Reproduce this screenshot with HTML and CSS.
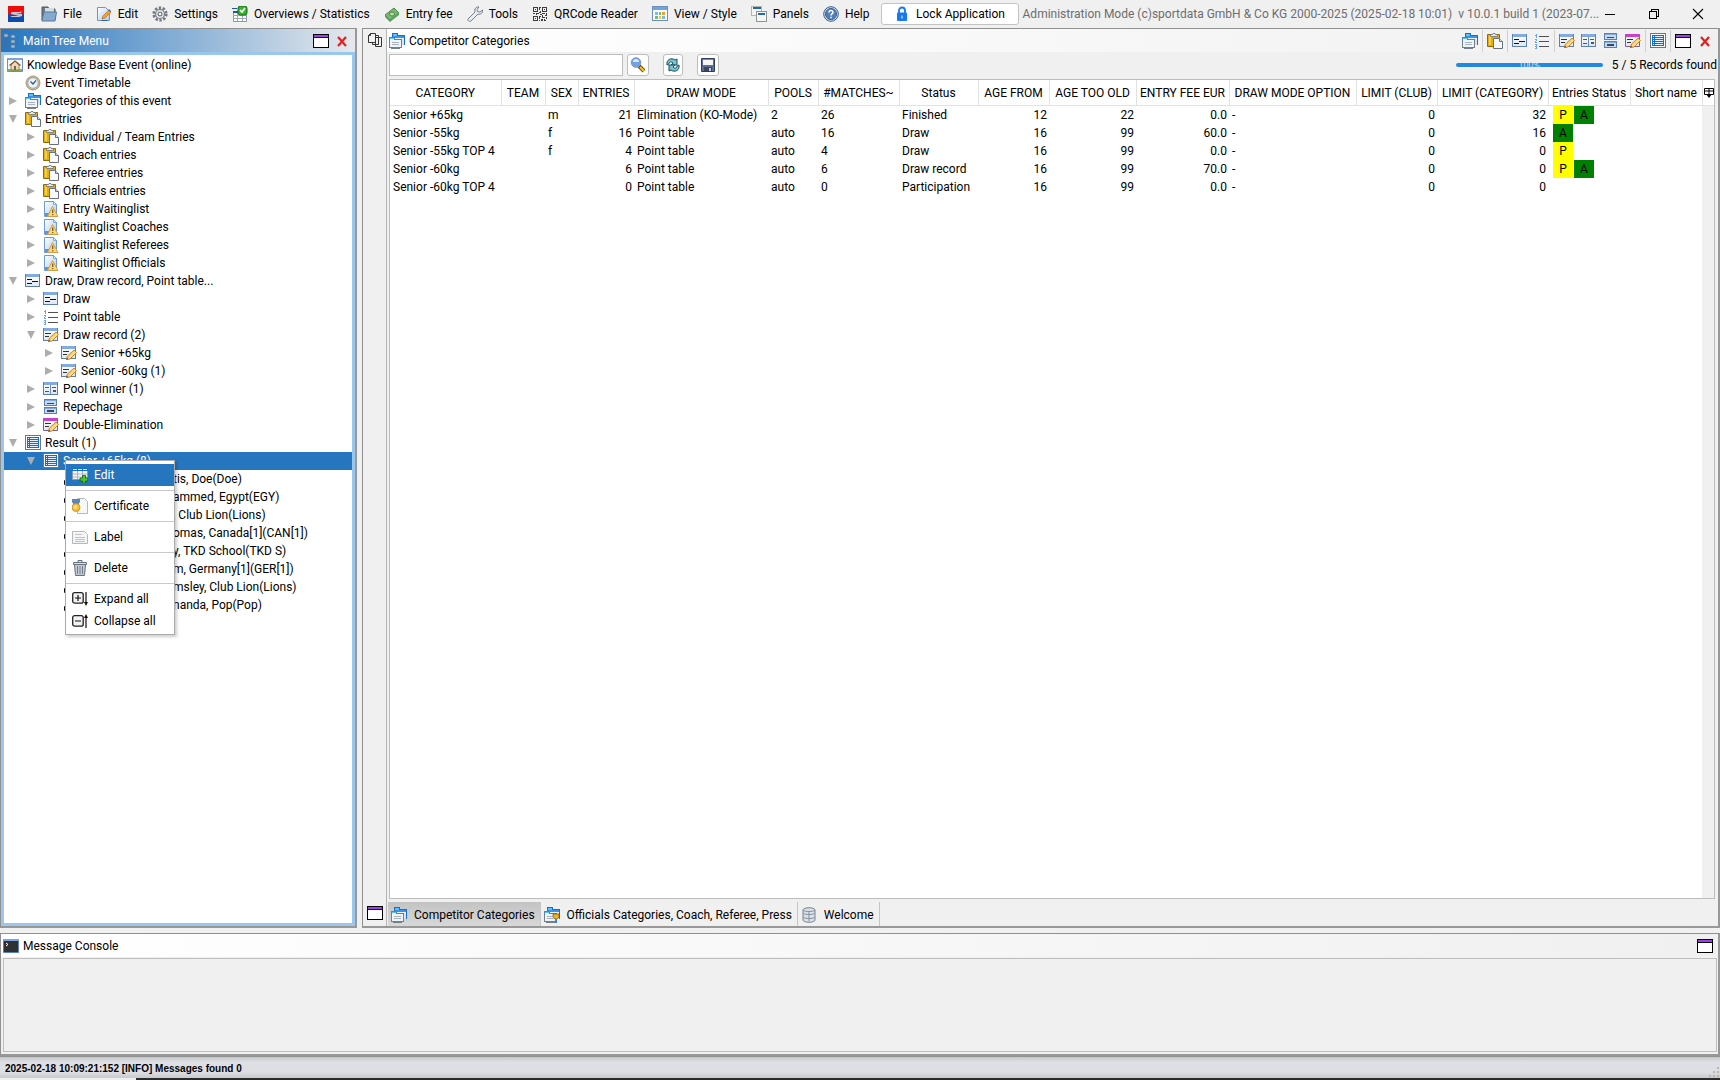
FILE: index.html
```html
<!DOCTYPE html>
<html lang="en">
<head>
  <meta charset="UTF-8">
  <meta name="viewport" content="width=device-width, initial-scale=1.0">
  <title>Administration Mode</title>
  <link rel="stylesheet" href="styles.css">
</head>
<body>

  <!-- icon sprite -->
  <svg class="sprite" aria-hidden="true">
    <defs>
      <linearGradient id="gWin" x1="0" y1="0" x2="0" y2="1"><stop offset="0" stop-color="#fff"/><stop offset="1" stop-color="#dfe6f0"/></linearGradient>
      <linearGradient id="gDoc" x1="0" y1="0" x2="1" y2="1"><stop offset="0" stop-color="#fff"/><stop offset="1" stop-color="#a9cbf2"/></linearGradient>
      <linearGradient id="gLogo" x1="0" y1="0" x2="0" y2="1"><stop offset="0" stop-color="#f00a0a"/><stop offset=".48" stop-color="#f00a0a"/><stop offset=".56" stop-color="#0a4bb4"/><stop offset="1" stop-color="#0a4bb4"/></linearGradient>
    </defs>
    <symbol id="logo" viewBox="0 0 16 16"><path fill="url(#gLogo)" d="M0 0h16v16H0z"/><path d="M3 6h9l2-1-1 2H7l7 1v2l-3 1H2l2-1h7L3 8z" fill="#c9c4cf"/></symbol>
    <symbol id="folder" viewBox="0 0 16 16"><path d="M1 1h6l1 2h6v11H1z" fill="#6b7885" stroke="#4c5864"/><path d="M4 2h9v6H4z" fill="#d5dde4"/><path d="M1 14l2-8h12.500L14 15H1z" fill="#87a9cd" stroke="#52779f"/></symbol>
    <symbol id="edit" viewBox="0 0 16 16"><path d="M1.500 1.500h8l4 4v9h-12z" fill="url(#gDoc)" stroke="#7c93b0"/><path d="M6 13l1-3 6-6 2 2-6 6z" fill="#f5a32a" stroke="#c0651a" stroke-width=".7"/><path d="M12 4l1-1 2 2-1 1z" fill="#2d6fd0"/><path d="M5 15h6v-1H6z" fill="#1e63c4"/></symbol>
    <symbol id="gear" viewBox="0 0 16 16"><circle cx="8" cy="8" r="6.300" fill="none" stroke="#737980" stroke-width="2.600" stroke-dasharray="2.400 1.550"/><circle cx="8" cy="8" r="4.500" fill="#e8ebee" stroke="#737980" stroke-width="1.200"/><circle cx="8" cy="8" r="1.900" fill="#fff" stroke="#737980" stroke-width="1.200"/></symbol>
    <symbol id="stats" viewBox="0 0 16 16"><path d="M1.500 6.500h13v9h-13z" fill="#fff" stroke="#8b97a5"/><path d="M1 9.500h14M1 12.500h14M5.500 6v9M10.500 6v9" stroke="#9aa8b6" fill="none"/><path d="M0 2h5v1H0zM1 5h14v2H1z" fill="#2057ae"/><rect x="6" y="0" width="9" height="9" rx="2.500" fill="#39b52c" stroke="#16651a"/><path d="M8 4l2 2 3-4" stroke="#fff" stroke-width="1.500" fill="none"/></symbol>
    <symbol id="money" viewBox="0 0 16 16"><path d="M1 9l9-7 5 5-9 7z" fill="#79b873" stroke="#478a49"/><path d="M1 11l5 5 9-7v-2l-9 7-5-5z" fill="#5da062"/><ellipse cx="8" cy="8" rx="2.500" ry="2" fill="#c1e0ae" stroke="#478a49"/></symbol>
    <symbol id="wrench" viewBox="0 0 16 16"><path d="M1 13l7-7c-1-3 1-5.500 4-5l-2 2.500.5 2L13 6l2.500-2c.5 3-2 5-4.500 4l-7 7c-1.500 1-4-.5-3-2z" fill="#e9edf1" stroke="#74808c"/></symbol>
    <symbol id="qr" viewBox="0 0 16 16" shape-rendering="crispEdges"><path d="M1.500 1.500h4v4h-4zM10.500 1.500h4v4h-4zM1.500 10.500h4v4h-4z" fill="none" stroke="#3d3d3d"/><path d="M3 3h1v1H3zM12 3h1v1h-1zM3 12h1v1H3zM7 1h2v1H8v2H7zM8 5h1v2H7V6h1zM1 7h2v1H1zM4 7h3v1H5v1H4zM8 8h2v1H8zM10 7h3v1h-3zM14 7h1v2h-1zM7 10h2v1H8v2H7zM10 9h1v2h2v1h-3zM13 9h2v1h-2zM14 11h1v2h-1zM9 13h2v2H9zM12 13h1v1h1v1h-2zM7 14h1v1H7z" fill="#3d3d3d"/></symbol>
    <symbol id="view" viewBox="0 0 16 16" shape-rendering="crispEdges"><path d="M.5.500h15v14H.5z" fill="#fff" stroke="#6a8fc0"/><path d="M1 1h14v3H1z" fill="#72a1dd"/><path d="M3 6h3v3H3zM10 10h3v3h-3z" fill="#82b7ee"/><path d="M7 6h2v3H7zM3 10h3v3H3z" fill="#6fc26a"/><path d="M10 6h3v3h-3z" fill="#f19b41"/><path d="M7 10h2v3H7z" fill="#edc63e"/></symbol>
    <symbol id="panels" viewBox="0 0 16 16" shape-rendering="crispEdges"><path d="M.5.500h10v9H.5z" fill="#f6f7f4" stroke="#b3b6ae"/><path d="M2 1h8v2H2z" fill="#2765b3"/><path d="M5.500 5.500h10v10h-10z" fill="#f6f7f4" stroke="#8f938b"/><path d="M7 7h7v2H7z" fill="#2765b3"/></symbol>
    <symbol id="help" viewBox="0 0 16 16"><circle cx="8" cy="8" r="7.300" fill="#d7e1ee" stroke="#385b8c"/><circle cx="8" cy="8" r="5.500" fill="#5580b6" stroke="#345e97"/><path d="M6 6.500C6 4 10 4 10 6.300 10 8 8 7.800 8 9.500M8 10.800v1.400" fill="none" stroke="#fff" stroke-width="1.500"/></symbol>
    <symbol id="lock" viewBox="0 0 16 16"><path d="M5 7V4.500a3 3 0 0 1 6 0V7" fill="none" stroke="#1479f2" stroke-width="1.800"/><rect x="3" y="6.500" width="10" height="8.500" rx="1" fill="#1479f2"/><path d="M7.500 9.500h1v3h-1z" fill="#fff"/></symbol>
    <symbol id="treeico" viewBox="0 0 16 16"><path d="M3.500 2v12M3 4.500h4M3 8.500h4M3 13h4" stroke="#426d9a" fill="none"/><path d="M1 1h4v3H1zM8 2h4v3H8zM8 7h4v3H8zM8 12h4v3H8z" fill="#a5bed6" stroke="#55789b" stroke-width=".8"/></symbol>
    <symbol id="window" viewBox="0 0 16 16" shape-rendering="crispEdges"><path d="M.5 1.500h15v13H.5z" fill="#fff" stroke="#000"/><path d="M1 2h14v2H1z" fill="#a43cf0"/><path d="M1 4h14v1H1z" fill="#000"/></symbol>
    <symbol id="cross" viewBox="0 0 16 16"><path d="M4 4l8 9M12 4l-8 9" stroke="#e0201f" stroke-width="2.200"/></symbol>
    <symbol id="home" viewBox="0 0 16 16"><path d="M.5 1.500h15v13H.5z" fill="#f5f8fb" stroke="#6f8fb8"/><path d="M1 1h14v2H1z" fill="#7ba5da"/><path d="M1 12h14v2H1z" fill="#7cb65b"/><path d="M4 8l4-4 4 4v5H4z" fill="#ead9b6" stroke="#8a6a45" stroke-width=".8"/><path d="M2.500 8.500L8 4l5.500 4.500" fill="none" stroke="#7d5134" stroke-width="1.200"/><path d="M7 9h2v4H7z" fill="#885f3c"/></symbol>
    <symbol id="clock" viewBox="0 0 16 16"><circle cx="8" cy="8" r="7" fill="#d2b98b" stroke="#9a8564" stroke-width=".8"/><circle cx="8" cy="8" r="5.200" fill="#eaf3fc" stroke="#8ea1b6" stroke-width=".8"/><path d="M5.500 6.500L8 9l3-3.500" fill="none" stroke="#3d5472" stroke-width="1.200"/></symbol>
    <symbol id="cats" viewBox="0 0 16 16" shape-rendering="crispEdges"><path d="M3.500 3.500V.5h5v2h7v9h-12z" fill="#eaf4ff" stroke="#176fcb"/><path d="M4 3h11v2H4z" fill="#3993e6"/><path d="M4 1h4v2H4z" fill="#58c4ff"/><path d="M13 6h2v6h-2z" fill="#dfe3e8"/><path d="M.5 7.500v-3h5v2h7v8H.5z" fill="#f1f4f7" stroke="#4886c7"/><path d="M0 8h1v7H0zM12 8h1v7h-1zM2 15h3v-1h3v1h3v1H2z" fill="#75808b"/><path d="M1 5h4v1H1z" fill="#58c4ff"/><path d="M3 9h7v1H3zM3 11h7v1H3z" fill="#aab4be"/></symbol>
    <symbol id="offcats" viewBox="0 0 16 16"><use href="#cats"/><path d="M9 7h6v3l-2 2h-2L9 10z" fill="#eeb51d" stroke="#65480a" stroke-width=".6"/><path d="M11 12h2v4h-2z" fill="#2785e3"/></symbol>
    <symbol id="paste" viewBox="0 0 16 16"><path d="M.5 1.500h12v12H.5z" fill="#e4ac13" stroke="#956a05"/><path d="M2 3h2v9H2z" fill="#f7cf45"/><path d="M3.500 3.500v-2h2l.5-1h2l.5 1h2v2z" fill="#e5e9ee" stroke="#68717c" stroke-width=".8"/><path d="M6.500 5.500h6l3 3v7h-9z" fill="#f9fafc" stroke="#68717c"/><path d="M12.500 5.500v3h3" fill="#dce2ea" stroke="#68717c"/></symbol>
    <symbol id="wait" viewBox="0 0 16 16"><path d="M1.500.5h9l3 3v12h-12z" fill="url(#gDoc)" stroke="#6e9bd0"/><path d="M10.500.5v3h3z" fill="#fff" stroke="#6e9bd0" stroke-width=".8"/><path d="M2 12h5v3H2z" fill="#5f95d8"/><path d="M9.500 5.500L15 15.500H4.500z" fill="#fbd674" stroke="#cf9a3f" stroke-width=".9"/><path d="M9.700 8.500v3.500M9.700 13v1.200" stroke="#79521c" stroke-width="1.200"/></symbol>
    <symbol id="frame" viewBox="0 0 16 16" shape-rendering="crispEdges"><path d="M.5 1.500h14v12H.5z" fill="url(#gWin)" stroke="#5d80b4"/><path d="M1 1h13v3H1z" fill="#84abe0"/></symbol>
    <symbol id="draw" viewBox="0 0 16 16" shape-rendering="crispEdges"><use href="#frame"/><path d="M2 6h5v1H2zM2 10h5v1H2zM7 8h6v1H7z" fill="#111"/></symbol>
    <symbol id="points" viewBox="0 0 16 16" shape-rendering="crispEdges"><path d="M5 3h10v1H5zM5 8h10v1H5zM5 13h10v1H5z" fill="#4e5257"/><path d="M2 1h1v4H2zM1 2h1v1H1zM1 6h2v1H1zM2 7h1v1H2zM1 8h1v1H1zM1 9h2v1H1zM1 11h2v1H1zM2 12h1v1H2zM1 13h2v1H1zM2 14h1v1H2zM1 15h2v1H1z" fill="#70a5e5"/></symbol>
    <symbol id="pencil" viewBox="0 0 16 16"><path d="M5.500 14.500l1-3.500L13 5l2.500 2.500-6.500 6.500z" fill="#fbcf6b" stroke="#be7f29" stroke-width=".9"/><path d="M7 14l7-6.500" stroke="#fff0bd" stroke-width=".8"/><path d="M5 15l.7-2.500L8 14z" fill="#a25a24"/></symbol>
    <symbol id="record" viewBox="0 0 16 16"><use href="#frame"/><path d="M2 6h6v1H2zM2 9h4v1H2z" fill="#333"/><use href="#pencil"/></symbol>
    <symbol id="pool" viewBox="0 0 16 16" shape-rendering="crispEdges"><use href="#frame"/><path d="M7 4h1v9H7z" fill="#6c8fc3"/><path d="M2 6h4v1H2zM2 10h4v1H2zM9 6h4v1H9zM10 9h3v2h-3z" fill="#555"/></symbol>
    <symbol id="repechage" viewBox="0 0 16 16" shape-rendering="crispEdges"><path d="M1.500.5h12v6h-12zM1.500 8.500h12v6h-12z" fill="#c4d9f4" stroke="#5d80b4"/><path d="M4 4h7v1H4zM4 11h7v2H4z" fill="#3f464e"/><path d="M2 1h11v1H2zM2 9h11v1H2z" fill="#84abe0"/></symbol>
    <symbol id="double" viewBox="0 0 16 16"><path d="M.5 1.500h14v12H.5z" fill="url(#gWin)" stroke="#7d5c9a"/><path d="M0 1h15v3H0z" fill="#cc3fcc"/><path d="M2 6h6v1H2zM2 9h4v1H2z" fill="#333"/><use href="#pencil"/></symbol>
    <symbol id="result" viewBox="0 0 16 16" shape-rendering="crispEdges"><path d="M.5.500h15v14H.5z" fill="#fff" stroke="#6c7680"/><path d="M2 2h12v11H2z" fill="#1070d2"/><path d="M5 3h8v1H5zM5 5h8v1H5zM5 7h8v1H5zM5 9h8v1H5zM5 11h8v1H5zM3 3h1v1H3zM3 5h1v1H3zM3 7h1v1H3zM3 9h1v1H3zM3 11h1v1H3z" fill="#e4f1ff"/></symbol>
    <symbol id="person" viewBox="0 0 16 16"><path d="M3 1h9v5H3z" fill="#b27b25"/><path d="M4.500 8.500h9v6h-9l-2-1v-4z" fill="#fff" stroke="#111"/></symbol>
    <symbol id="tableadd" viewBox="0 0 16 16"><path d="M.5 1.500h15v11H.5z" fill="#f4f7fa" stroke="#8e9aa6"/><path d="M0 1h16v3H0z" fill="#1470d0"/><path d="M1 2h4v1H1zM6 2h4v1H6zM11 2h4v1h-4z" fill="#d5ecff"/><path d="M1 7h14M1 10h14M5.500 4v8M10.500 4v8" stroke="#aab3bd"/><path d="M10.500 8.500h3v2.500h2.500v3h-2.500V16h-3v-2H8v-3h2.500z" fill="#48c72e" stroke="#155c12" stroke-width=".8"/></symbol>
    <symbol id="cert" viewBox="0 0 16 16"><path d="M5.500.5h7l3 3v12h-10z" fill="#f7f8f9" stroke="#b4b9be"/><path d="M0 1h8v3L6 7H2L0 4z" fill="#5b85b8"/><circle cx="4" cy="9.500" r="4" fill="#f6bd36" stroke="#c98a1c" stroke-width=".8"/><circle cx="3.500" cy="9" r="1.800" fill="#ffe08a"/></symbol>
    <symbol id="label" viewBox="0 0 16 16"><path d="M.5 2.500h12l3 3v9H.5z" fill="#f4f5f6" stroke="#b4b9be"/><path d="M3 5.500h7M3 8.500h10M3 10.500h10M3 12.500h10" stroke="#c0c5ca"/></symbol>
    <symbol id="trash" viewBox="0 0 16 16"><path d="M2.500 4.500h11l-1 11h-9z" fill="#c3ccd6" stroke="#66717d"/><path d="M1.500 2.500h13v2h-13zM6 2V.5h4V2" fill="#dde3e9" stroke="#66717d"/><path d="M5.500 6v8M8 6v8M10.500 6v8" stroke="#737f8c"/></symbol>
    <symbol id="expand" viewBox="0 0 16 16"><rect x=".7" y="1.700" width="10.500" height="10.500" rx="2" fill="#f2f2f2" stroke="#222" stroke-width="1.300"/><path d="M3 7h6M6 4v6M14 1v12" stroke="#111" stroke-width="1.200"/><path d="M12 11h4l-2 4z" fill="#111"/></symbol>
    <symbol id="collapse" viewBox="0 0 16 16"><rect x=".7" y="2.700" width="10.500" height="10.500" rx="2" fill="#f2f2f2" stroke="#222" stroke-width="1.300"/><path d="M3 8h6M14 3v12" stroke="#111" stroke-width="1.200"/><path d="M12 5h4l-2-4z" fill="#111"/></symbol>
    <symbol id="copies" viewBox="0 0 16 16"><path d="M8.500 5.500h6v9h-6zM5.500 3.500h6v9h-6z" fill="#f1f1f1" stroke="#333"/><path d="M3.500 1.500h5v9h-7v-7z" fill="#f1f1f1" stroke="#333"/><path d="M3.500 1.500v2h-2" fill="none" stroke="#333"/></symbol>
    <symbol id="search" viewBox="0 0 16 16"><path d="M9 9l5 5" stroke="#7d4c12" stroke-width="4"/><path d="M10 10l4 4" stroke="#f3c12d" stroke-width="2.200"/><circle cx="6" cy="5.500" r="4.800" fill="#6fa3e8" stroke="#8797ae"/><path d="M3 5a3 3 0 0 1 6 0z" fill="#d6e8fd"/></symbol>
    <symbol id="refresh" viewBox="0 0 16 16"><path d="M2 8c-1-5 4-8 8-5l2-1v6H6l2-2c-2-2-4-1-4 1z" fill="#7cc3cd" stroke="#154f60"/><path d="M14 8c1 5-4 8-8 5l-2 1V8h6l-2 2c2 2 4 1 4-1z" fill="#7cc3cd" stroke="#154f60"/></symbol>
    <symbol id="save" viewBox="0 0 16 16"><path d="M1.500 1.500h13v13h-13z" fill="#5b6e95" stroke="#323f5c"/><path d="M3 2h10v6H3z" fill="#f7f4f2"/><path d="M3 2h10v1H3z" fill="#e6604d"/><path d="M4 10h8v4H4z" fill="#3a465c"/><path d="M9 11h2v3H9z" fill="#c5ced9"/></symbol>
    <symbol id="db" viewBox="0 0 16 16"><path d="M2 3c0-3 12-3 12 0v10c0 3-12 3-12 0z" fill="#dce1e7" stroke="#74818e"/><path d="M2 6c1 2 11 2 12 0M2 10c1 2 11 2 12 0M2 3c1 2 11 2 12 0M8 5v9" fill="none" stroke="#8592a0"/></symbol>
    <symbol id="console" viewBox="0 0 16 16"><path d="M.5 1.500h15v13H.5z" fill="#2e3033" stroke="#5880b8"/><path d="M0 1h16v2H0z" fill="#7aa6dd"/><path d="M3 5l2 1.500L3 8" stroke="#fff" fill="none"/></symbol>
    <symbol id="colctl" viewBox="0 0 12 14"><path d="M1.500 2.500h9v6h-9zM1 5h10M6 2v6" fill="none" stroke="#000"/><path d="M3 8h6l-3 4z" fill="#000"/></symbol>
    <symbol id="min" viewBox="0 0 12 12" shape-rendering="crispEdges"><path d="M1 6h10v1H1z"/></symbol>
    <symbol id="restore" viewBox="0 0 12 12" shape-rendering="crispEdges"><path d="M1.500 3.500h7v7h-7zM3.500 3V1.500h7v7H9" fill="none" stroke="#000"/></symbol>
    <symbol id="close" viewBox="0 0 12 12"><path d="M1 1l10 10M11 1L1 11" stroke="#000" stroke-width="1.100"/></symbol>
    <symbol id="grip" viewBox="0 0 12 12" shape-rendering="crispEdges"><path d="M9 1h2v2H9zM5 5h2v2H5zM9 5h2v2H9zM1 9h2v2H1zM5 9h2v2H5zM9 9h2v2H9z" fill="#b8b8a8"/></symbol>
  </svg>

  <header class="menubar">
    <svg class="icon app-logo"><use href="#logo"/></svg>
    <nav class="menus">
      <button class="menu"><svg class="icon"><use href="#folder"/></svg>File</button>
      <button class="menu"><svg class="icon"><use href="#edit"/></svg>Edit</button>
      <button class="menu"><svg class="icon"><use href="#gear"/></svg>Settings</button>
      <button class="menu"><svg class="icon"><use href="#stats"/></svg>Overviews / Statistics</button>
      <button class="menu"><svg class="icon"><use href="#money"/></svg>Entry fee</button>
      <button class="menu"><svg class="icon"><use href="#wrench"/></svg>Tools</button>
      <button class="menu"><svg class="icon"><use href="#qr"/></svg>QRCode Reader</button>
      <button class="menu"><svg class="icon"><use href="#view"/></svg>View / Style</button>
      <button class="menu"><svg class="icon"><use href="#panels"/></svg>Panels</button>
      <button class="menu"><svg class="icon"><use href="#help"/></svg>Help</button>
    </nav>
    <button class="lock-btn"><svg class="icon"><use href="#lock"/></svg>Lock Application</button>
    <span class="app-title">Administration Mode (c)sportdata GmbH &amp; Co KG 2000-2025 (2025-02-18 10:01)&nbsp; v 10.0.1 build 1 (2023-07...</span>
    <div class="win-controls">
      <button aria-label="Minimize"><svg><use href="#min"/></svg></button>
      <button aria-label="Restore"><svg><use href="#restore"/></svg></button>
      <button aria-label="Close"><svg><use href="#close"/></svg></button>
    </div>
  </header>

  <main class="workspace">

    <!-- left: tree -->
    <section class="pane tree-pane">
      <div class="pane-title active">
        <svg class="icon"><use href="#treeico"/></svg>
        <h2>Main Tree Menu</h2>
        <button class="icon-btn" aria-label="Maximize"><svg class="icon"><use href="#window"/></svg></button>
        <button class="icon-btn" aria-label="Close"><svg class="icon"><use href="#cross"/></svg></button>
      </div>
      <div class="tree-box">
        <ul class="tree">
          <li class="node root"><svg class="icon"><use href="#home"/></svg>Knowledge Base Event (online)</li>
          <li class="node leaf"><svg class="icon"><use href="#clock"/></svg>Event Timetable</li>
          <li class="node"><button class="toggle" aria-label="Expand"></button><svg class="icon"><use href="#cats"/></svg>Categories of this event</li>
          <li class="node"><button class="toggle open" aria-label="Collapse"></button><svg class="icon"><use href="#paste"/></svg>Entries</li>
          <li class="node l2"><button class="toggle" aria-label="Expand"></button><svg class="icon"><use href="#paste"/></svg>Individual / Team Entries</li>
          <li class="node l2"><button class="toggle" aria-label="Expand"></button><svg class="icon"><use href="#paste"/></svg>Coach entries</li>
          <li class="node l2"><button class="toggle" aria-label="Expand"></button><svg class="icon"><use href="#paste"/></svg>Referee entries</li>
          <li class="node l2"><button class="toggle" aria-label="Expand"></button><svg class="icon"><use href="#paste"/></svg>Officials entries</li>
          <li class="node l2"><button class="toggle" aria-label="Expand"></button><svg class="icon"><use href="#wait"/></svg>Entry Waitinglist</li>
          <li class="node l2"><button class="toggle" aria-label="Expand"></button><svg class="icon"><use href="#wait"/></svg>Waitinglist Coaches</li>
          <li class="node l2"><button class="toggle" aria-label="Expand"></button><svg class="icon"><use href="#wait"/></svg>Waitinglist Referees</li>
          <li class="node l2"><button class="toggle" aria-label="Expand"></button><svg class="icon"><use href="#wait"/></svg>Waitinglist Officials</li>
          <li class="node"><button class="toggle open" aria-label="Collapse"></button><svg class="icon"><use href="#draw"/></svg>Draw, Draw record, Point table...</li>
          <li class="node l2"><button class="toggle" aria-label="Expand"></button><svg class="icon"><use href="#draw"/></svg>Draw</li>
          <li class="node l2"><button class="toggle" aria-label="Expand"></button><svg class="icon"><use href="#points"/></svg>Point table</li>
          <li class="node l2"><button class="toggle open" aria-label="Collapse"></button><svg class="icon"><use href="#record"/></svg>Draw record (2)</li>
          <li class="node l3"><button class="toggle" aria-label="Expand"></button><svg class="icon"><use href="#record"/></svg>Senior +65kg</li>
          <li class="node l3"><button class="toggle" aria-label="Expand"></button><svg class="icon"><use href="#record"/></svg>Senior -60kg (1)</li>
          <li class="node l2"><button class="toggle" aria-label="Expand"></button><svg class="icon"><use href="#pool"/></svg>Pool winner (1)</li>
          <li class="node l2"><button class="toggle" aria-label="Expand"></button><svg class="icon"><use href="#repechage"/></svg>Repechage</li>
          <li class="node l2"><button class="toggle" aria-label="Expand"></button><svg class="icon"><use href="#double"/></svg>Double-Elimination</li>
          <li class="node"><button class="toggle open" aria-label="Collapse"></button><svg class="icon"><use href="#result"/></svg>Result (1)</li>
          <li class="node l2 selected"><button class="toggle open" aria-label="Collapse"></button><svg class="icon"><use href="#result"/></svg>Senior +65kg (8)
            <div class="popup">
              <button class="popup-item current"><svg class="icon"><use href="#tableadd"/></svg>Edit</button>
              <hr>
              <button class="popup-item"><svg class="icon"><use href="#cert"/></svg>Certificate</button>
              <hr>
              <button class="popup-item"><svg class="icon"><use href="#label"/></svg>Label</button>
              <hr>
              <button class="popup-item"><svg class="icon"><use href="#trash"/></svg>Delete</button>
              <hr>
              <button class="popup-item"><svg class="icon"><use href="#expand"/></svg>Expand all</button>
              <button class="popup-item"><svg class="icon"><use href="#collapse"/></svg>Collapse all</button>
            </div>
          </li>
          <li class="node athlete"><svg class="icon"><use href="#person"/></svg>tis, Doe(Doe)</li>
          <li class="node athlete"><svg class="icon"><use href="#person"/></svg>ammed, Egypt(EGY)</li>
          <li class="node athlete"><svg class="icon"><use href="#person"/></svg>, Club Lion(Lions)</li>
          <li class="node athlete"><svg class="icon"><use href="#person"/></svg>omas, Canada[1](CAN[1])</li>
          <li class="node athlete"><svg class="icon"><use href="#person"/></svg>y, TKD School(TKD S)</li>
          <li class="node athlete"><svg class="icon"><use href="#person"/></svg>m, Germany[1](GER[1])</li>
          <li class="node athlete"><svg class="icon"><use href="#person"/></svg>msley, Club Lion(Lions)</li>
          <li class="node athlete"><svg class="icon"><use href="#person"/></svg>nanda, Pop(Pop)</li>
        </ul>
      </div>
    </section>

    <!-- right: categories -->
    <section class="pane main-pane">
      <div class="side-strip">
        <button class="icon-btn" aria-label="Restore panels"><svg class="icon"><use href="#copies"/></svg></button>
        <button class="icon-btn" aria-label="Maximize"><svg class="icon"><use href="#window"/></svg></button>
      </div>
      <div class="main-col">
        <div class="pane-title">
          <svg class="icon"><use href="#cats"/></svg>
          <h2>Competitor Categories</h2>
          <div class="tools">
            <div class="tool-group"><button class="icon-btn" aria-label="Categories"><svg class="icon"><use href="#cats"/></svg></button></div>
            <div class="tool-group"><button class="icon-btn" aria-label="Entries"><svg class="icon"><use href="#paste"/></svg></button></div>
            <div class="tool-group">
              <button class="icon-btn" aria-label="Draw"><svg class="icon"><use href="#draw"/></svg></button>
              <button class="icon-btn" aria-label="Point table"><svg class="icon"><use href="#points"/></svg></button>
            </div>
            <div class="tool-group">
              <button class="icon-btn" aria-label="Draw record"><svg class="icon"><use href="#record"/></svg></button>
              <button class="icon-btn" aria-label="Pool winner"><svg class="icon"><use href="#pool"/></svg></button>
              <button class="icon-btn" aria-label="Repechage"><svg class="icon"><use href="#repechage"/></svg></button>
              <button class="icon-btn" aria-label="Double-Elimination"><svg class="icon"><use href="#double"/></svg></button>
            </div>
            <div class="tool-group"><button class="icon-btn" aria-label="Result"><svg class="icon"><use href="#result"/></svg></button></div>
            <div class="tool-group">
              <button class="icon-btn" aria-label="Maximize"><svg class="icon"><use href="#window"/></svg></button>
              <button class="icon-btn" aria-label="Close"><svg class="icon"><use href="#cross"/></svg></button>
            </div>
          </div>
        </div>

        <div class="filterbar">
          <input class="search" type="text" aria-label="Search">
          <button class="square-btn" aria-label="Search"><svg class="icon"><use href="#search"/></svg></button>
          <button class="square-btn narrow" aria-label="Refresh"><svg class="icon"><use href="#refresh"/></svg></button>
          <button class="square-btn" aria-label="Save"><svg class="icon"><use href="#save"/></svg></button>
          <div class="progress"><span>100%</span></div>
          <span class="records">5 / 5 Records found</span>
        </div>

        <div class="table-box">
          <table>
            <colgroup>
              <col class="c-cat"><col class="c-team"><col class="c-sex"><col class="c-entries"><col class="c-mode"><col class="c-pools"><col class="c-matches"><col class="c-status"><col class="c-from"><col class="c-old"><col class="c-fee"><col class="c-option"><col class="c-club"><col class="c-limit"><col class="c-estatus"><col><col class="c-ctl">
            </colgroup>
            <thead>
              <tr>
                <th>CATEGORY</th><th>TEAM</th><th>SEX</th><th>ENTRIES</th><th>DRAW MODE</th><th>POOLS</th><th>#MATCHES~</th><th>Status</th><th>AGE FROM</th><th>AGE TOO OLD</th><th>ENTRY FEE EUR</th><th>DRAW MODE OPTION</th><th>LIMIT (CLUB)</th><th>LIMIT (CATEGORY)</th><th>Entries Status</th><th>Short name</th>
                <th class="ctl"><button aria-label="Columns"><svg><use href="#colctl"/></svg></button></th>
              </tr>
            </thead>
            <tbody>
              <tr><td>Senior +65kg</td><td></td><td>m</td><td class="num">21</td><td>Elimination (KO-Mode)</td><td>2</td><td>26</td><td>Finished</td><td class="num">12</td><td class="num">22</td><td class="num">0.0</td><td>-</td><td class="num">0</td><td class="num">32</td><td class="flags"><span class="flag p">P</span><span class="flag a">A</span></td><td></td><td class="track"></td></tr>
              <tr><td>Senior -55kg</td><td></td><td>f</td><td class="num">16</td><td>Point table</td><td>auto</td><td>16</td><td>Draw</td><td class="num">16</td><td class="num">99</td><td class="num">60.0</td><td>-</td><td class="num">0</td><td class="num">16</td><td class="flags"><span class="flag a">A</span></td><td></td><td class="track"></td></tr>
              <tr><td>Senior -55kg TOP 4</td><td></td><td>f</td><td class="num">4</td><td>Point table</td><td>auto</td><td>4</td><td>Draw</td><td class="num">16</td><td class="num">99</td><td class="num">0.0</td><td>-</td><td class="num">0</td><td class="num">0</td><td class="flags"><span class="flag p">P</span></td><td></td><td class="track"></td></tr>
              <tr><td>Senior -60kg</td><td></td><td></td><td class="num">6</td><td>Point table</td><td>auto</td><td>6</td><td>Draw record</td><td class="num">16</td><td class="num">99</td><td class="num">70.0</td><td>-</td><td class="num">0</td><td class="num">0</td><td class="flags"><span class="flag p">P</span><span class="flag a">A</span></td><td></td><td class="track"></td></tr>
              <tr><td>Senior -60kg TOP 4</td><td></td><td></td><td class="num">0</td><td>Point table</td><td>auto</td><td>0</td><td>Participation</td><td class="num">16</td><td class="num">99</td><td class="num">0.0</td><td>-</td><td class="num">0</td><td class="num">0</td><td class="flags"></td><td></td><td class="track"></td></tr>
            </tbody>
          </table>
          <div class="track-fill"></div>
        </div>

        <div class="tabs">
          <button class="tab current"><svg class="icon"><use href="#cats"/></svg>Competitor Categories</button>
          <button class="tab"><svg class="icon"><use href="#offcats"/></svg>Officials Categories, Coach, Referee, Press</button>
          <button class="tab"><svg class="icon"><use href="#db"/></svg>Welcome</button>
        </div>
      </div>
    </section>
  </main>

  <section class="pane console-pane">
    <div class="pane-title">
      <svg class="icon"><use href="#console"/></svg>
      <h2>Message Console</h2>
      <button class="icon-btn" aria-label="Maximize"><svg class="icon"><use href="#window"/></svg></button>
    </div>
    <div class="console-box"></div>
  </section>

  <footer class="statusbar">
    <span>2025-02-18 10:09:21:152 [INFO] Messages found 0</span>
    <svg class="grip" aria-hidden="true"><use href="#grip"/></svg>
  </footer>
  <div class="taskbar-edge"></div>

</body>
</html>
```
FILE: styles.css
```css
* {
  box-sizing: border-box;
}

body {
  margin: 0;
  height: 100vh;
  display: flex;
  flex-direction: column;
  overflow: hidden;
  background: #f0f0f0;
  color: #000;
  font-family: Roboto, "Open Sans", sans-serif;
  font-size: 12px;
  line-height: 18px;
  white-space: nowrap;
}

button {
  font: inherit;
  color: inherit;
  background: none;
  border: none;
  padding: 0;
}

.sprite {
  position: absolute;
  width: 0;
  height: 0;
}

.icon {
  width: 16px;
  height: 16px;
  flex: none;
}

/* menu bar */
.menubar {
  display: flex;
  align-items: center;
  height: 28px;
  padding-left: 8px;
}

.menus {
  display: flex;
  flex: none;
  margin-left: 10px;
}

.menu {
  display: flex;
  align-items: center;
  gap: 6px;
  padding: 0 7px;
}

.lock-btn {
  display: flex;
  align-items: center;
  justify-content: center;
  gap: 6px;
  flex: none;
  width: 138px;
  height: 22px;
  margin-left: 4px;
  background: #fff;
  border: 1px solid #c3c3c3;
  border-radius: 3px;
}

.app-title {
  flex: 1 0 auto;
  margin-left: 4px;
  color: #6d6d6d;
}

.win-controls {
  display: flex;
  flex: none;
  gap: 32px;
  padding-right: 16px;
}

.win-controls button {
  display: flex;
}

.win-controls svg {
  width: 12px;
  height: 12px;
}

/* panes */
.workspace {
  display: flex;
  flex: 1;
  gap: 5px;
  min-height: 0;
}

.pane {
  border: 1px solid #909090;
  border-right: 2px solid #989898;
  border-bottom: 2px solid #989898;
}

.pane-title {
  display: flex;
  align-items: center;
  flex: none;
  height: 23px;
  padding: 1px 5px 0 2px;
  background: linear-gradient(to right, #fff, #f0f0f0);
}

.pane-title.active {
  color: #fff;
  background: linear-gradient(to right, #2675bf, #e6e8ec);
}

.pane-title h2 {
  flex: 1;
  margin: 0 0 0 4px;
  font-size: 12px;
  font-weight: normal;
}

.icon-btn {
  display: flex;
}

.pane-title > .icon-btn + .icon-btn {
  margin-left: 5px;
}

.tree-pane {
  display: flex;
  flex-direction: column;
  flex: 0 0 357px;
}

.tree-box {
  flex: 1;
  border: 3px solid #99c7ee;
  background: #fff;
}

.tree {
  margin: 0;
  padding: 1px 0;
  list-style: none;
}

.node {
  display: flex;
  align-items: center;
  gap: 4px;
  height: 18px;
}

.root {
  padding-left: 3px;
}

.leaf {
  padding-left: 21px;
}

.l2 {
  padding-left: 18px;
}

.l3 {
  padding-left: 36px;
}

.athlete {
  gap: 95px;
  padding-left: 58px;
}

.selected {
  position: relative;
  background: #2675bf;
  color: #fff;
}

.toggle {
  display: flex;
  justify-content: center;
  width: 17px;
}

.toggle::before {
  content: "";
  border: 4px solid transparent;
  border-left: 8px solid #adadad;
  border-right: 0;
}

.toggle.open::before {
  border: 4px solid transparent;
  border-top: 8px solid #adadad;
  border-bottom: 0;
}

/* context menu */
.popup {
  position: absolute;
  top: 8px;
  left: 61px;
  z-index: 2;
  width: 110px;
  padding: 3px 0 2px;
  background: #fff;
  border: 1px solid #acacac;
  box-shadow: 2px 2px 3px #00000033;
  color: #000;
}

.popup-item {
  display: flex;
  align-items: center;
  gap: 6px;
  width: 100%;
  height: 22px;
  padding-left: 6px;
}

.popup-item.current {
  background: #2675bf;
  color: #fff;
}

.popup hr {
  height: 1px;
  margin: 4px 0;
  border: none;
  background: #c9c9c9;
}

/* categories pane */
.main-pane {
  display: flex;
  flex: 1;
  min-width: 0;
}

.side-strip {
  display: flex;
  flex-direction: column;
  align-items: center;
  justify-content: space-between;
  width: 24px;
  padding: 3px 0 5px;
  border-right: 1px solid #b4b4b4;
}

.main-col {
  display: flex;
  flex-direction: column;
  flex: 1;
  min-width: 0;
}

.tools {
  display: flex;
}

.tool-group {
  display: flex;
  gap: 6px;
  padding: 3px 4px;
}

.tool-group + .tool-group {
  border-left: 1px solid #cfcfcf;
}

.tool-group:last-child {
  padding-right: 0;
}

.filterbar {
  display: flex;
  align-items: center;
  height: 27px;
  padding: 0 0 2px 2px;
}

.search {
  width: 234px;
  height: 22px;
  margin-right: 4px;
  border: 1px solid #bdbdbd;
  background: #fff;
  font: inherit;
}

.square-btn {
  display: flex;
  align-items: center;
  justify-content: center;
  width: 22px;
  height: 22px;
  margin-right: 14px;
  background: #fff;
  border: 1px solid #bdbdbd;
  border-radius: 3px;
}

.square-btn.narrow {
  width: 20px;
}

.progress {
  display: flex;
  justify-content: center;
  width: 147px;
  height: 4px;
  margin-left: auto;
  border-radius: 2px;
  background: #2288e0;
  color: #cfe5fa;
  font-size: 9px;
  line-height: 4px;
  overflow: hidden;
}

.records {
  margin: 0 1px 0 9px;
}

.table-box {
  display: flex;
  flex-direction: column;
  flex: 1;
  margin: 0 3px 3px 2px;
  border: 1px solid #bdbdbd;
  background: #fff;
}

table {
  width: 100%;
  table-layout: fixed;
  border-collapse: collapse;
}

th {
  height: 25px;
  padding: 2px 0 0;
  border-right: 1px solid #e2e2e2;
  border-bottom: 1px solid #e2e2e2;
  font-weight: normal;
}

td {
  height: 18px;
  padding: 0 2px 0 3px;
}

.num {
  text-align: right;
}

.flags {
  padding-left: 5px;
}

.ctl {
  border-right: none;
}

.ctl button {
  display: flex;
}

.ctl svg {
  width: 12px;
  height: 14px;
}

.c-cat { width: 111px; }
.c-team { width: 44px; }
.c-sex { width: 33px; }
.c-entries { width: 56px; }
.c-mode { width: 134px; }
.c-pools { width: 50px; }
.c-matches { width: 81px; }
.c-status { width: 79px; }
.c-from { width: 71px; }
.c-old { width: 87px; }
.c-fee { width: 93px; }
.c-option { width: 127px; }
.c-club { width: 81px; }
.c-limit { width: 111px; }
.c-estatus { width: 82px; }
.c-ctl { width: 12px; }

.track {
  background: #f0f0f0;
}

.track-fill {
  flex: 1;
  align-self: flex-end;
  width: 12px;
  background: #f0f0f0;
}

.flag {
  display: inline-block;
  width: 20px;
  height: 18px;
  margin-right: 1px;
  text-align: center;
  vertical-align: top;
}

.flag.p {
  background: #ff0;
}

.flag.a {
  background: #008000;
}

.tabs {
  display: flex;
  flex: none;
  height: 24px;
  padding-left: 1px;
}

.tab {
  display: flex;
  align-items: center;
  gap: 7px;
  padding: 1px 5px 0 3px;
  border-right: 1px solid #c6c6c6;
}

.tab.current {
  background: linear-gradient(#c3c3c3, #d8d8d8);
}

/* console */
.console-pane {
  display: flex;
  flex-direction: column;
  flex: none;
  height: 123px;
  margin-top: 5px;
}

.console-box {
  flex: 1;
  margin: 1px 1px 2px 2px;
  border: 1px solid #bdbdbd;
}

.statusbar {
  display: flex;
  align-items: flex-end;
  justify-content: space-between;
  flex: none;
  height: 22px;
  padding-left: 5px;
  border-top: 1px solid #909090;
  background: linear-gradient(#c6c7cc, #dddfe5 5px, #dddfe5 15px, #c9cace);
  font: bold 10px/18px "Liberation Sans", Arial, sans-serif;
}

.grip {
  width: 12px;
  height: 12px;
}

.taskbar-edge {
  flex: none;
  height: 2px;
  background: linear-gradient(to right, #eee 136px, #2b2b2b 136px);
}
```
